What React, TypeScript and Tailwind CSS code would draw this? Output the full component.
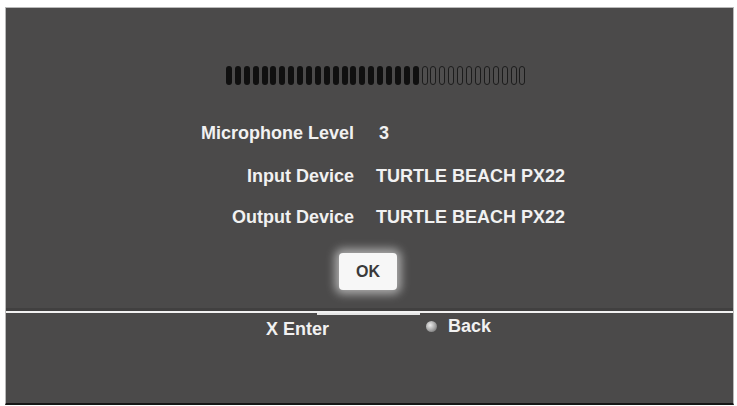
import React from 'react';

const FILLED = 22;
const TOTAL = 34;

const rows = [
  { label: 'Microphone Level', value: '3', gap: 'pl-[25px]' },
  { label: 'Input Device', value: 'TURTLE BEACH PX22', gap: 'pl-[22px]' },
  { label: 'Output Device', value: 'TURTLE BEACH PX22', gap: 'pl-[22px]' },
];

const LevelMeter = () => (
  <div className="flex gap-[2.9px] ml-[220px]">
    {Array.from({ length: TOTAL }).map((_, i) =>
      i < FILLED ? (
        <div key={i} className="w-[6px] h-[19px] rounded-full bg-[#101010]" />
      ) : (
        <div key={i} className="w-[6px] h-[19px] rounded-full border border-[#1c1c1c] bg-[#4f4e4e]" />
      ),
    )}
  </div>
);

export default function App() {
  return (
    <div className="w-[737px] h-[406px] bg-white pt-[7px] pl-[5px] font-['Liberation_Sans',Arial,sans-serif]">
      <div className="w-[729px] h-[398px] bg-[#4b4a4a] border-t border-x border-[#b9b9b9] border-b-2 border-b-[#161616] flex flex-col">
        {/* upper dialog area */}
        <div className="h-[303px] pt-[58px] flex flex-col border-b-[3px] border-[#414040]">
          <LevelMeter />
          <div className="mt-[38px] flex flex-col">
            {rows.map((r, i) => (
              <div
                key={r.label}
                className={`flex text-[18px] leading-[21px] font-bold text-[#f1f1f1] ${i === 1 ? 'mt-[22px]' : ''} ${i === 2 ? 'mt-[20px]' : ''}`}
              >
                <span className="w-[348px] text-right">{r.label}</span>
                <span className={r.gap}>{r.value}</span>
              </div>
            ))}
          </div>
          <div className="mt-[25px] ml-[333px] w-[58px] h-[37px] rounded-[4px] bg-[#f7f7f7] shadow-[0_0_10px_4px_rgba(255,255,255,0.55)] flex items-center justify-center">
            <span className="text-[16px] font-bold text-[#3a3a3a]">OK</span>
          </div>
        </div>
        <div className="h-[2px] bg-[#f2f2f2]" />
        {/* footer */}
        <div className="relative flex-1">
          <div className="absolute left-[311px] top-0 w-[103px] h-[2px] bg-[#e6e6e6]" />
          <div className="flex items-start pl-[260px] text-[18px] leading-[21px] font-bold text-[#f1f1f1]">
            <span className="mt-[6px]">X Enter</span>
            <div className="ml-[97px] mt-[3px] flex items-center gap-[11px]">
              <div className="w-[11px] h-[11px] shrink-0 rounded-full bg-[radial-gradient(circle_at_38%_38%,#ececec,#a8a8a8_50%,#5a5a5a)]" />
              <span>Back</span>
            </div>
          </div>
        </div>
      </div>
    </div>
  );
}
